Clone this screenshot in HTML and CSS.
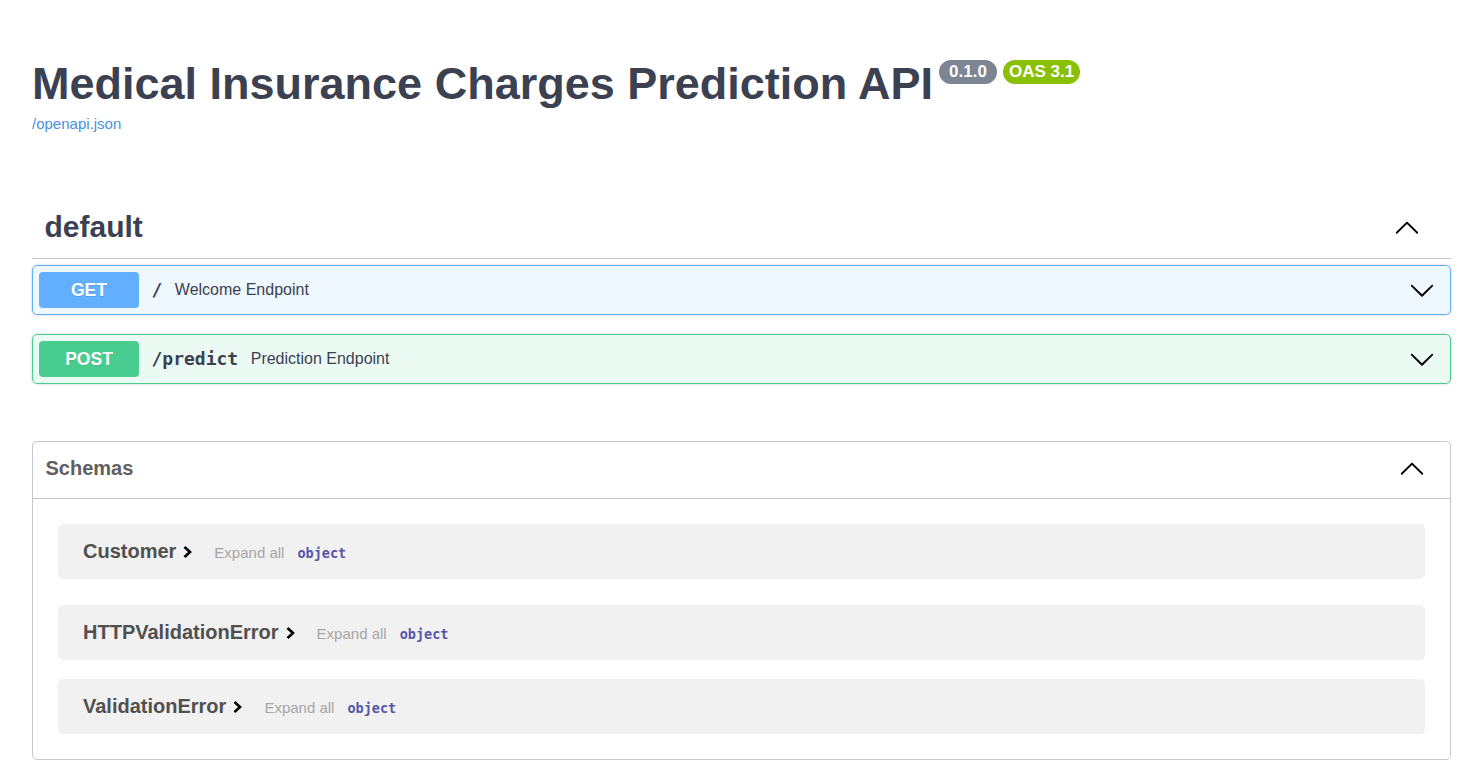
FILE: index.html
```html
<!DOCTYPE html>
<html lang="en">
<head>
<meta charset="utf-8">
<title>Medical Insurance Charges Prediction API - Swagger UI</title>
<link rel="stylesheet" href="styles.css">
</head>
<body>
<div class="wrapper">
  <div class="info">
    <h2 class="title">
      <span class="title-text">Medical Insurance Charges Prediction API</span>
      <span class="badges">
        <small class="badge ver">0.1.0</small>
        <small class="badge oas">OAS 3.1</small>
      </span>
    </h2>
    <a class="link" href="#">/openapi.json</a>
  </div>

  <section class="tag-section">
    <h3 class="tag">
      <span class="tag-name">default</span>
      <span class="toggle">
        <svg class="arrow" viewBox="0 0 20 20" width="26" height="26"><path d="M17.418 14.908c.272.268.709.268.979 0s.271-.701 0-.969l-7.908-7.83c-.27-.268-.707-.268-.979 0l-7.908 7.83c-.27.268-.27.701 0 .969.271.268.709.268.979 0L10 7.767l7.418 7.141z"/></svg>
      </span>
    </h3>

    <div class="opblock get">
      <div class="summary">
        <span class="method">GET</span>
        <span class="path">/</span>
        <span class="desc">Welcome Endpoint</span>
        <svg class="arrow down" viewBox="0 0 20 20" width="26" height="26"><path d="M17.418 6.109c.272-.268.709-.268.979 0s.271.701 0 .969l-7.908 7.83c-.27.268-.707.268-.979 0l-7.908-7.83c-.27-.268-.27-.701 0-.969.271-.268.709-.268.979 0L10 13.25l7.418-7.141z"/></svg>
      </div>
    </div>

    <div class="opblock post">
      <div class="summary">
        <span class="method">POST</span>
        <span class="path">/predict</span>
        <span class="desc">Prediction Endpoint</span>
        <svg class="arrow down" viewBox="0 0 20 20" width="26" height="26"><path d="M17.418 6.109c.272-.268.709-.268.979 0s.271.701 0 .969l-7.908 7.83c-.27.268-.707.268-.979 0l-7.908-7.83c-.27-.268-.27-.701 0-.969.271-.268.709-.268.979 0L10 13.25l7.418-7.141z"/></svg>
      </div>
    </div>
  </section>

  <section class="models">
    <h4 class="models-head">
      <span>Schemas</span>
      <svg class="arrow" viewBox="0 0 20 20" width="26" height="26"><path d="M17.418 14.908c.272.268.709.268.979 0s.271-.701 0-.969l-7.908-7.83c-.27-.268-.707-.268-.979 0l-7.908 7.83c-.27.268-.27.701 0 .969.271.268.709.268.979 0L10 7.767l7.418 7.141z"/></svg>
    </h4>
    <div class="models-content">
      <div class="model">
        <span class="model-title">Customer</span>
        <svg class="chev" viewBox="0 0 14 14" width="14" height="14"><path d="M2.5 2 L8 7 L2.5 12"/></svg>
        <span class="expand">Expand all</span>
        <span class="type">object</span>
      </div>
      <div class="model">
        <span class="model-title">HTTPValidationError</span>
        <svg class="chev" viewBox="0 0 14 14" width="14" height="14"><path d="M2.5 2 L8 7 L2.5 12"/></svg>
        <span class="expand">Expand all</span>
        <span class="type">object</span>
      </div>
      <div class="model">
        <span class="model-title">ValidationError</span>
        <svg class="chev" viewBox="0 0 14 14" width="14" height="14"><path d="M2.5 2 L8 7 L2.5 12"/></svg>
        <span class="expand">Expand all</span>
        <span class="type">object</span>
      </div>
    </div>
  </section>
</div>
</body>
</html>
```

FILE: styles.css
```css
* { box-sizing: border-box; }

html, body {
  margin: 0;
  padding: 0;
  background: #fff;
}

body {
  font-family: "Liberation Sans", Arial, sans-serif;
  color: #3b4151;
}

.wrapper {
  padding: 0 32px 20px;
}

/* ---------- Info ---------- */
.info {
  margin-top: 58px;
}

.title {
  display: flex;
  align-items: flex-start;
  margin: 0;
  font-size: 45px;
  line-height: 52px;
  font-weight: 700;
  color: #3b4151;
}

.badges {
  display: flex;
  gap: 6px;
  margin-left: 6px;
  margin-top: 2px;
}

.badge {
  display: inline-block;
  font-size: 17px;
  line-height: 20px;
  font-weight: 700;
  color: #fff;
  padding: 2px 10px;
  border-radius: 57px;
}

.badge.ver { background: #7d8492; }
.badge.oas { background: #89bf04; padding: 2px 6px; }

.link {
  display: block;
  margin-top: 4px;
  font-size: 15px;
  line-height: 20px;
  color: #4990e2;
  text-decoration: none;
  width: max-content;
}

/* ---------- Tag section ---------- */
.tag-section {
  margin-top: 64px;
  padding-bottom: 1px;
}

.tag {
  display: flex;
  align-items: center;
  margin: 0 0 6px;
  padding: 12px 25px 13px 12.5px;
  border-bottom: 1px solid rgba(59, 65, 81, .3);
  font-size: 30px;
  line-height: 34.5px;
  font-weight: 700;
  color: #3b4151;
}

.tag-name { flex: 1; }

.toggle {
  display: flex;
  padding: 0 6px;
}

.arrow {
  display: block;
  fill: #000;
}

/* ---------- Operation blocks ---------- */
.opblock {
  border: 1px solid #000;
  border-radius: 5px;
  margin: 0 0 19px;
  box-shadow: 0 0 3px rgba(0, 0, 0, .19);
}

.opblock.get {
  background: rgba(97, 175, 254, .1);
  border-color: #61affe;
}

.opblock.post {
  background: rgba(73, 204, 144, .1);
  border-color: #49cc90;
}

.summary {
  display: flex;
  align-items: center;
  padding: 6px;
}

.method {
  min-width: 100px;
  padding: 8px 0;
  border-radius: 4px;
  font-size: 17.5px;
  line-height: 20px;
  font-weight: 700;
  text-align: center;
  color: #fff;
  text-shadow: 0 1px 0 rgba(0, 0, 0, .1);
}

.get .method { background: #61affe; }
.post .method { background: #49cc90; }

.path {
  padding: 0 12.5px;
  font-family: "DejaVu Sans Mono", "Liberation Mono", monospace;
  font-size: 18px;
  font-weight: 700;
  color: #3b4151;
}

.desc {
  flex: 1;
  font-size: 16px;
  color: #3b4151;
}

.arrow.down {
  margin-right: 9px;
}

/* ---------- Models ---------- */
.models {
  margin-top: 37px;
  border: 1px solid rgba(59, 65, 81, .3);
  border-radius: 5px;
}

.models-head {
  display: flex;
  align-items: center;
  justify-content: space-between;
  margin: 0;
  padding: 11px 25px 14px 12.5px;
  border-bottom: 1px solid rgba(59, 65, 81, .3);
  font-size: 20px;
  line-height: 31px;
  font-weight: 700;
  color: #606060;
}

.models-content {
  padding: 25px;
  display: flex;
  flex-direction: column;
}

.model {
  display: flex;
  align-items: baseline;
  padding: 12.5px 25px;
  background: rgba(0, 0, 0, .055);
  border-radius: 5px;
  margin-bottom: 19px;
}

.model:first-child { margin-bottom: 26px; }
.model:last-child { margin-bottom: 0; }

.model-title {
  font-size: 20px;
  line-height: 30px;
  font-weight: 700;
  color: #505050;
}

.chev {
  align-self: center;
  margin-left: 6px;
  margin-top: 2px;
  fill: none;
  stroke: #000;
  stroke-width: 2.6;
}

.expand {
  margin-left: 18px;
  font-size: 15px;
  color: #a6a6a6;
}

.type {
  margin-left: 13px;
  font-family: "DejaVu Sans Mono", "Liberation Mono", monospace;
  font-size: 13.5px;
  font-weight: 700;
  color: #55a;
}
```
